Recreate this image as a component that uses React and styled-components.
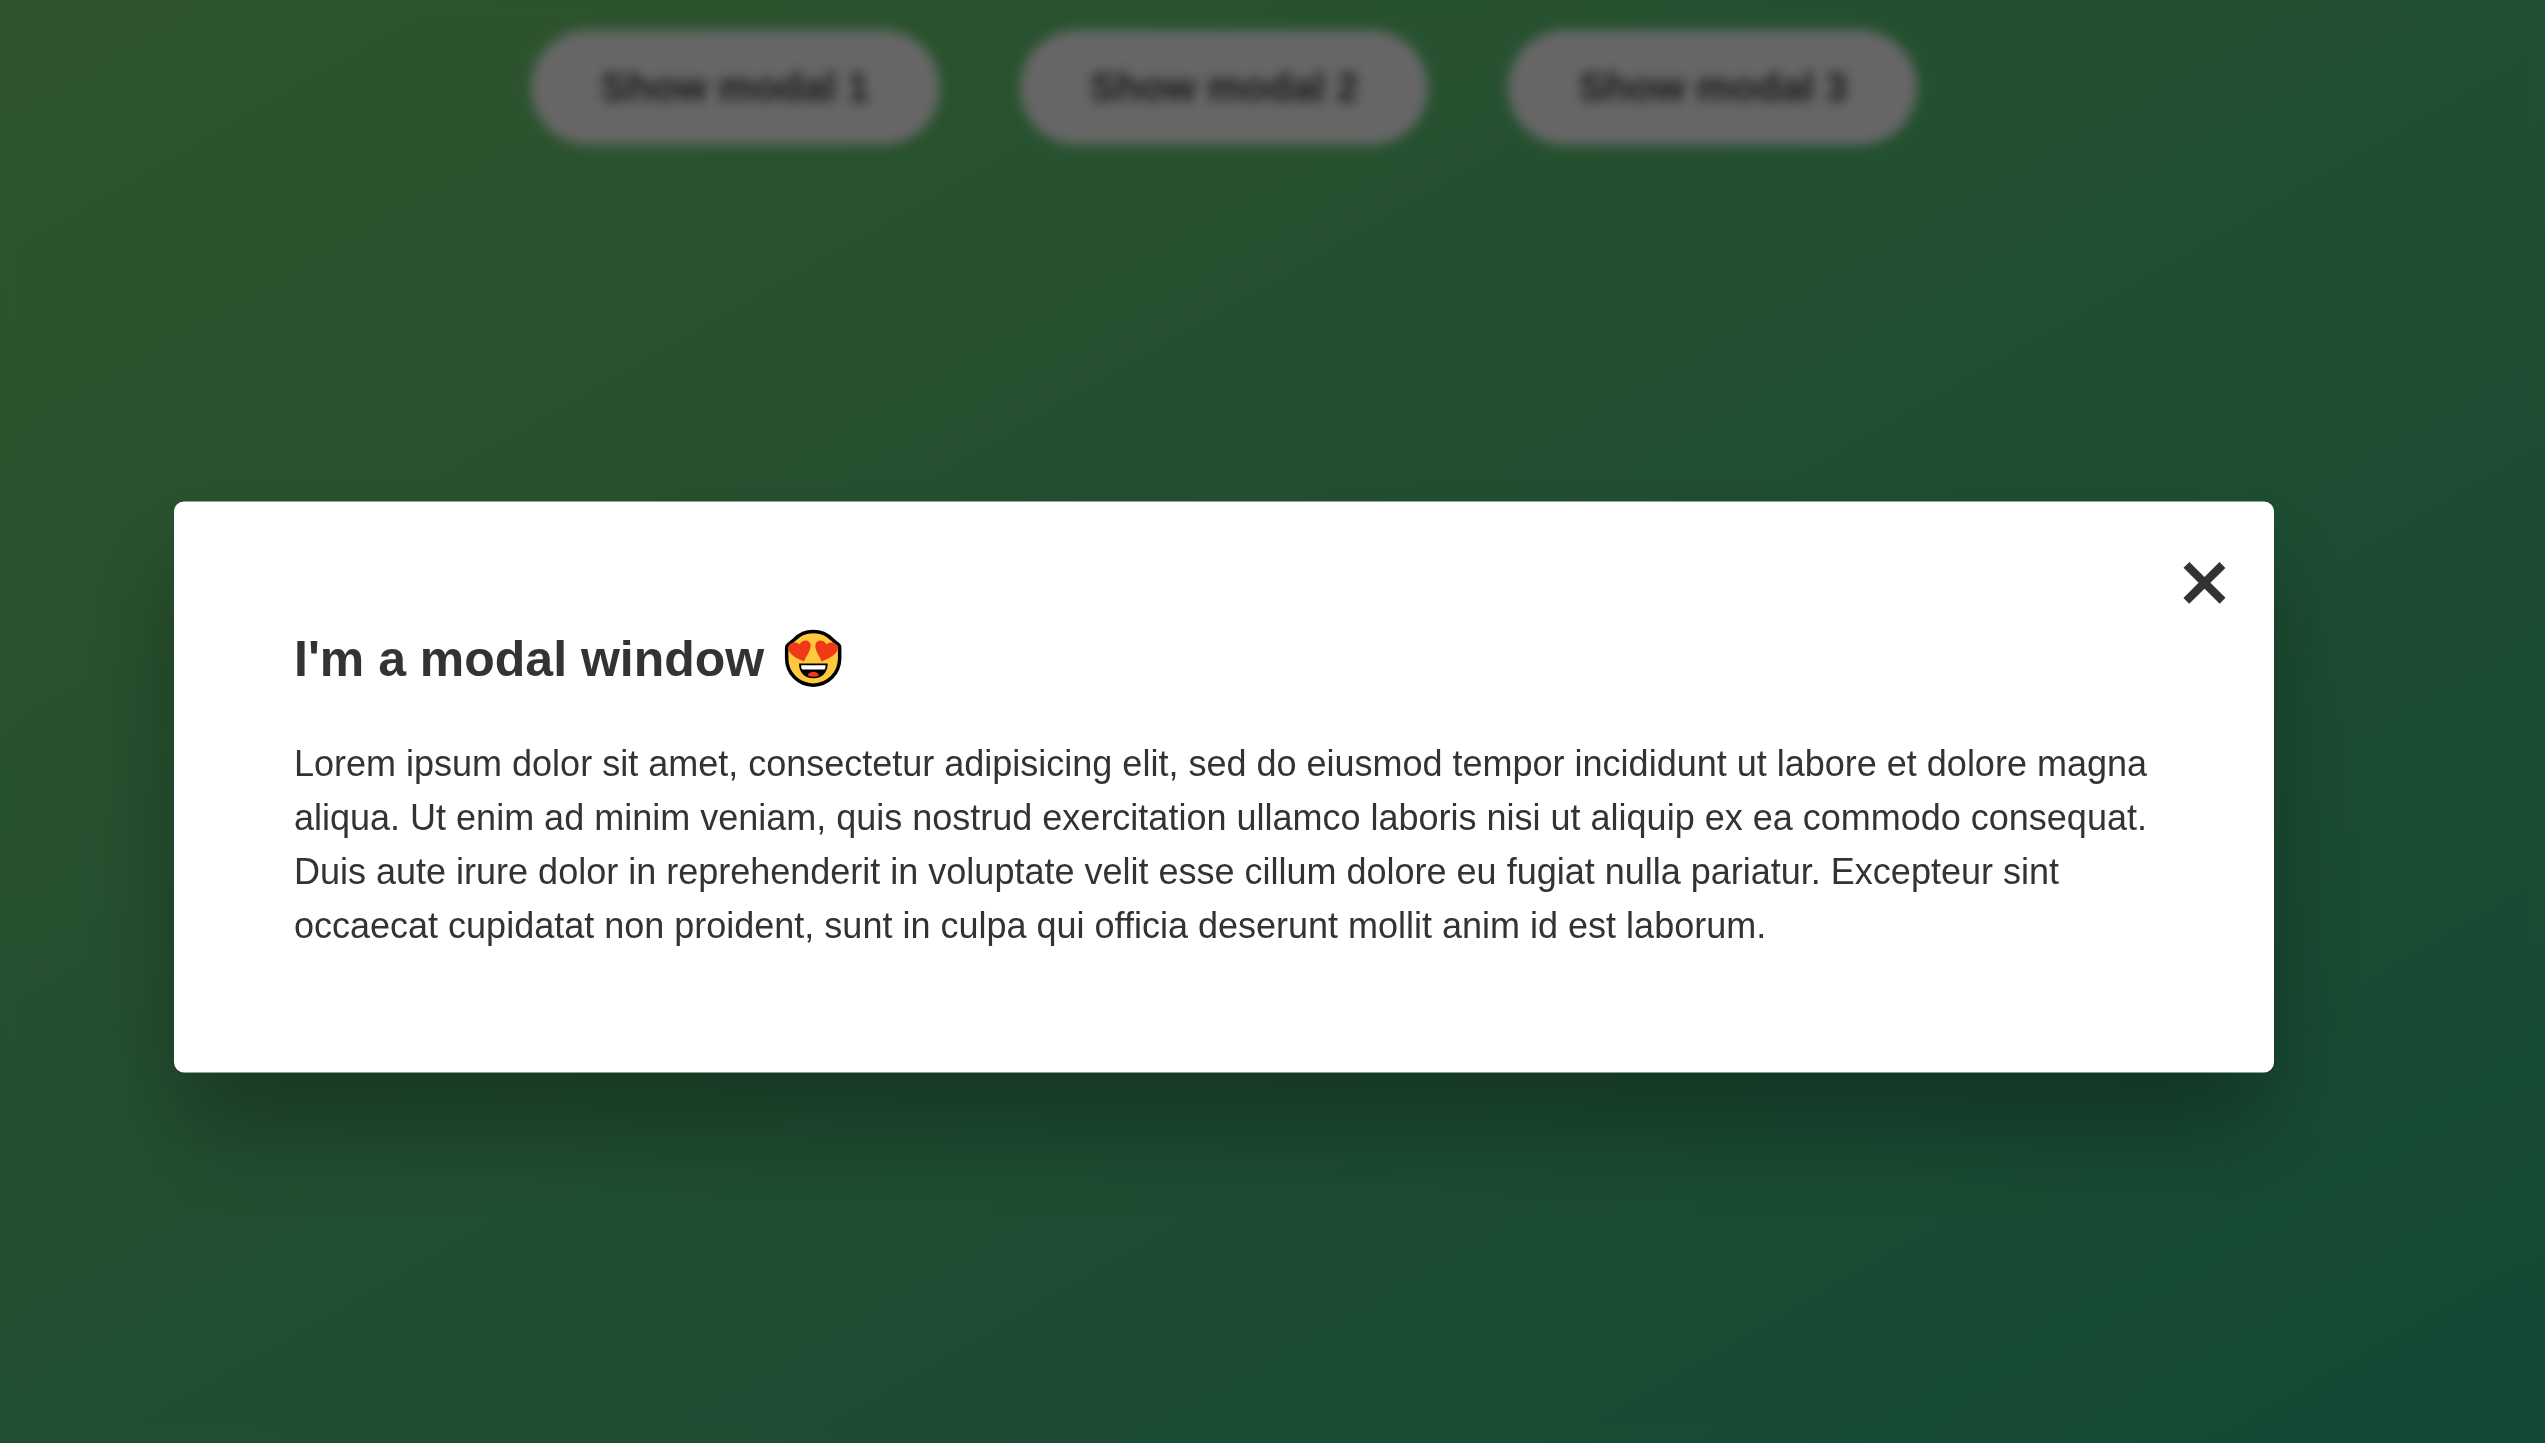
import React from "react";
import styled, { createGlobalStyle } from "styled-components";

const GlobalStyle = createGlobalStyle`
  *, *::before, *::after { box-sizing: border-box; margin: 0; padding: 0; }
  body {
    font-family: "Liberation Sans", Arial, sans-serif;
    color: #333;
    line-height: 1.5;
    overflow: hidden;
  }
`;

const Page = styled.div`
  position: relative;
  width: 2545px;
  height: 1443px;
  overflow: hidden;
  background: linear-gradient(to top left, #28b487, #7dd56f) -276px -70px / 3000px 1713px no-repeat;
`;

const ButtonRow = styled.div`
  display: flex;
  justify-content: center;
  gap: 80px;
  padding: 30px 97px 0 0;
`;

const ShowButton = styled.button`
  font-family: inherit;
  font-size: 40px;
  font-weight: 600;
  line-height: normal;
  color: #444;
  background: #fff;
  padding: 35px 70px;
  border: none;
  border-radius: 200px;
  white-space: nowrap;
  cursor: pointer;
`;

const Overlay = styled.div`
  position: absolute;
  inset: 0;
  display: flex;
  justify-content: center;
  align-items: flex-start;
  padding: 501px 97px 0 0;
  background: rgba(0, 0, 0, 0.6);
  backdrop-filter: blur(6px);
`;

const Dialog = styled.section`
  position: relative;
  width: 2100px;
  padding: 120px;
  background: #fff;
  border-radius: 10px;
  box-shadow: 0 60px 100px rgba(0, 0, 0, 0.3);
  transform: translateY(0.5px);
`;

const CloseButton = styled.button`
  position: absolute;
  top: 24px;
  right: 40px;
  width: 59px;
  text-align: center;
  font-family: inherit;
  font-size: 88px;
  line-height: 111px;
  color: #333;
  -webkit-text-stroke: 2px #333;
  background: none;
  border: none;
  cursor: pointer;
`;

const Title = styled.h1`
  display: flex;
  align-items: center;
  gap: 20px;
  font-size: 50px;
  line-height: 75px;
  margin-bottom: 40px;
`;

const Emoji = styled.svg`
  width: 59px;
  height: 59px;
  margin-bottom: 3px;
`;

const Body = styled.p`
  font-size: 36px;
  line-height: 54px;
`;

const HeartEyes = () => (
  <Emoji viewBox="12 12 177 177" aria-hidden="true">
    <path
      d="M43 45A80 80 0 0 1 157 45L176 61Q179 64 179 69V102A79.500 80 0 0 1 20 102V69Q20 64 24 61Z"
      fill="#ffc83d"
      stroke="#000"
      strokeWidth="10.500"
      strokeLinejoin="round"
    />
    <path d="M72 111C51 102 27 91 25 72c-1-17 22-24 34-12 6-16 31-17 33 2 1 17-13 31-20 49Z" fill="#f03a17" />
    <path d="M125 111c21-9 46-20 49-39 1-17-23-24-35-12-6-16-31-17-33 2-1 17 12 31 19 49Z" fill="#f03a17" />
    <path d="M57 117h86c0 27-16 44-43 44s-43-17-43-44Z" fill="#000" />
    <path d="M63 122h74c0 5-1 9-3 13H66c-2-4-3-8-3-13Z" fill="#fff" />
    <path d="M83 153c2-7 9-11 17-11s15 4 17 11c-10 5-24 5-34 0Z" fill="#f03a17" />
  </Emoji>
);

const labels = ["Show modal 1", "Show modal 2", "Show modal 3"];

export default function App() {
  return (
    <Page>
      <GlobalStyle />
      <ButtonRow>
        {labels.map((label) => (
          <ShowButton key={label}>{label}</ShowButton>
        ))}
      </ButtonRow>
      <Overlay>
        <Dialog role="dialog">
          <CloseButton aria-label="Close">×</CloseButton>
          <Title>
            I'm a modal window
            <HeartEyes />
          </Title>
          <Body>
            Lorem ipsum dolor sit amet, consectetur adipisicing elit, sed do eiusmod tempor incididunt ut labore et
            dolore magna aliqua. Ut enim ad minim veniam, quis nostrud exercitation ullamco laboris nisi ut aliquip ex
            ea commodo consequat. Duis aute irure dolor in reprehenderit in voluptate velit esse cillum dolore eu fugiat
            nulla pariatur. Excepteur sint occaecat cupidatat non proident, sunt in culpa qui officia deserunt mollit
            anim id est laborum.
          </Body>
        </Dialog>
      </Overlay>
    </Page>
  );
}
